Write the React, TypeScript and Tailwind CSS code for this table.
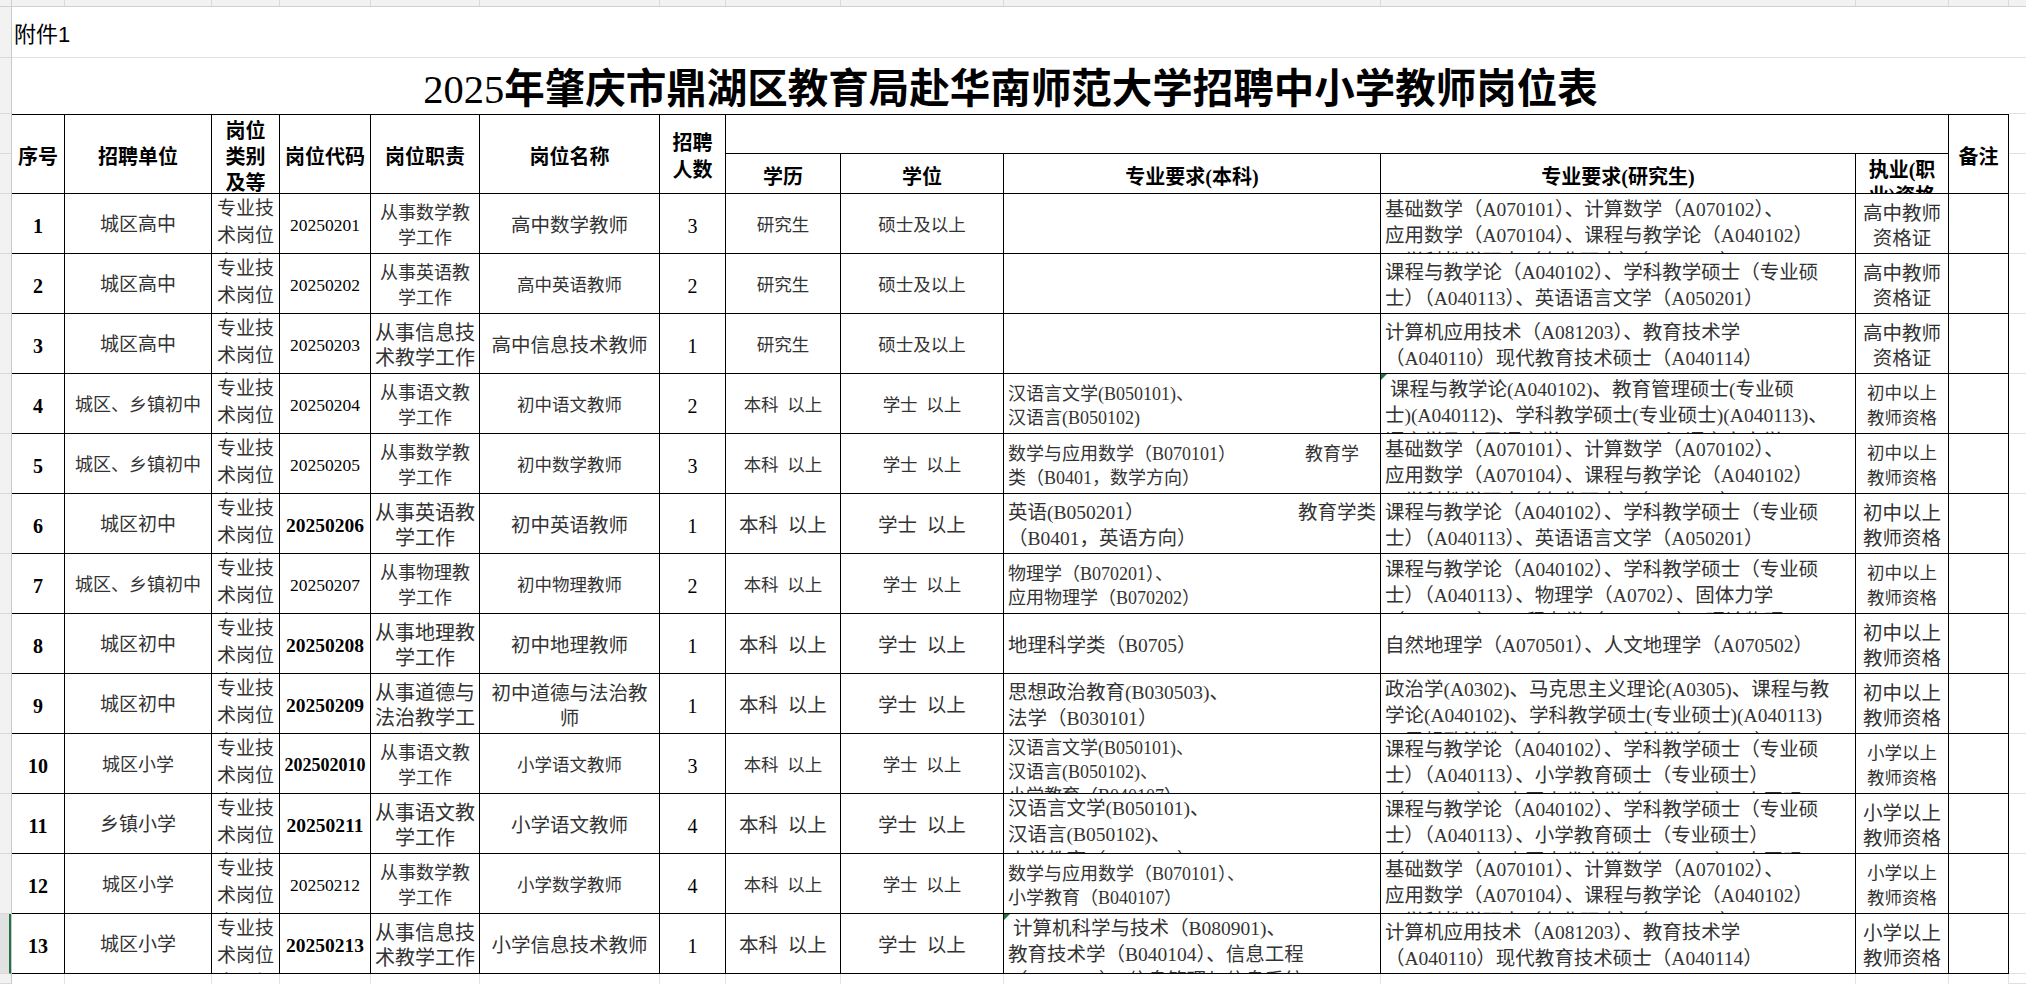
import React from 'react';

type Row = {
  no: string;
  unit: string;
  code: string;
  duty: string[];
  name: string[];
  num: string;
  edu: string;
  deg: string;
  bk: string[];
  bkSplit?: { left: string; right: string; rest: string[]; wide?: boolean };
  yjs: string[];
  cert: string[];
  big?: boolean;
  uBig?: boolean;
  dBig?: boolean;
  nBig?: boolean;
  cBig?: boolean;
  bold?: boolean;
  smallCode?: boolean;
  tick?: 'bk' | 'yjs';
};

const widthCls = [
  'w-[53px]',
  'w-[147px]',
  'w-[68px]',
  'w-[91px]',
  'w-[109px]',
  'w-[180px]',
  'w-[66px]',
  'w-[115px]',
  'w-[163px]',
  'w-[377px]',
  'w-[475px]',
  'w-[93px]',
  'w-[60px]',
];

const rows: Row[] = [
  {
    no: '1', unit: '城区高中', code: '20250201', duty: ['从事数学教', '学工作'], name: ['高中数学教师'], num: '3',
    edu: '研究生', deg: '硕士及以上', bk: [],
    yjs: ['基础数学（A070101）、计算数学（A070102）、', '应用数学（A070104）、课程与教学论（A040102）', '、学科教学硕士（专业硕士）（A040113）'],
    cert: ['高中教师', '资格证'], uBig: true, nBig: true, cBig: true,
  },
  {
    no: '2', unit: '城区高中', code: '20250202', duty: ['从事英语教', '学工作'], name: ['高中英语教师'], num: '2',
    edu: '研究生', deg: '硕士及以上', bk: [],
    yjs: ['课程与教学论（A040102）、学科教学硕士（专业硕', '士）（A040113）、英语语言文学（A050201）'],
    cert: ['高中教师', '资格证'], uBig: true, cBig: true,
  },
  {
    no: '3', unit: '城区高中', code: '20250203', duty: ['从事信息技', '术教学工作'], name: ['高中信息技术教师'], num: '1',
    edu: '研究生', deg: '硕士及以上', bk: [],
    yjs: ['计算机应用技术（A081203）、教育技术学', '（A040110）现代教育技术硕士（A040114）'],
    cert: ['高中教师', '资格证'], uBig: true, dBig: true, nBig: true, cBig: true,
  },
  {
    no: '4', unit: '城区、乡镇初中', code: '20250204', duty: ['从事语文教', '学工作'], name: ['初中语文教师'], num: '2',
    edu: '本科  以上', deg: '学士  以上', bk: ['汉语言文学(B050101)、', '汉语言(B050102)'],
    yjs: [' 课程与教学论(A040102)、教育管理硕士(专业硕', '士)(A040112)、学科教学硕士(专业硕士)(A040113)、', '语言学及应用语言学(A050102)、汉语言文字学'],
    cert: ['初中以上', '教师资格'], tick: 'yjs',
  },
  {
    no: '5', unit: '城区、乡镇初中', code: '20250205', duty: ['从事数学教', '学工作'], name: ['初中数学教师'], num: '3',
    edu: '本科  以上', deg: '学士  以上', bk: [],
    bkSplit: { left: '数学与应用数学（B070101）', right: '教育学', rest: ['类（B0401，数学方向）'] },
    yjs: ['基础数学（A070101）、计算数学（A070102）、', '应用数学（A070104）、课程与教学论（A040102）', '、学科教学硕士（专业硕士）（A040113）'],
    cert: ['初中以上', '教师资格'],
  },
  {
    no: '6', unit: '城区初中', code: '20250206', duty: ['从事英语教', '学工作'], name: ['初中英语教师'], num: '1',
    edu: '本科  以上', deg: '学士  以上', bk: [],
    bkSplit: { left: '英语(B050201）', right: '教育学类', rest: ['（B0401，英语方向）'], wide: true },
    yjs: ['课程与教学论（A040102）、学科教学硕士（专业硕', '士）（A040113）、英语语言文学（A050201）'],
    cert: ['初中以上', '教师资格'], big: true, uBig: true, dBig: true, nBig: true, cBig: true, bold: true,
  },
  {
    no: '7', unit: '城区、乡镇初中', code: '20250207', duty: ['从事物理教', '学工作'], name: ['初中物理教师'], num: '2',
    edu: '本科  以上', deg: '学士  以上', bk: ['物理学（B070201）、', '应用物理学（B070202）'],
    yjs: ['课程与教学论（A040102）、学科教学硕士（专业硕', '士）（A040113）、物理学（A0702）、固体力学', '（A080102）、工程力学（A080104）、理论物理'],
    cert: ['初中以上', '教师资格'],
  },
  {
    no: '8', unit: '城区初中', code: '20250208', duty: ['从事地理教', '学工作'], name: ['初中地理教师'], num: '1',
    edu: '本科  以上', deg: '学士  以上', bk: ['地理科学类（B0705）'],
    yjs: ['自然地理学（A070501）、人文地理学（A070502）'],
    cert: ['初中以上', '教师资格'], big: true, uBig: true, dBig: true, nBig: true, cBig: true, bold: true,
  },
  {
    no: '9', unit: '城区初中', code: '20250209', duty: ['从事道德与', '法治教学工', '作'], name: ['初中道德与法治教', '师'], num: '1',
    edu: '本科  以上', deg: '学士  以上', bk: ['思想政治教育(B030503)、', '法学（B030101）'],
    yjs: ['政治学(A0302)、马克思主义理论(A0305)、课程与教', '学论(A040102)、学科教学硕士(专业硕士)(A040113)', '、思想政治教育（A030505）、法学（A0301）'],
    cert: ['初中以上', '教师资格'], big: true, uBig: true, dBig: true, nBig: true, cBig: true, bold: true,
  },
  {
    no: '10', unit: '城区小学', code: '202502010', duty: ['从事语文教', '学工作'], name: ['小学语文教师'], num: '3',
    edu: '本科  以上', deg: '学士  以上', bk: ['汉语言文学(B050101)、', '汉语言(B050102)、', '小学教育（B040107）'],
    yjs: ['课程与教学论（A040102）、学科教学硕士（专业硕', '士）（A040113）、小学教育硕士（专业硕士）', '（A040115）、中国古代文学（A050105）、中国现'],
    cert: ['小学以上', '教师资格'], bold: true, smallCode: true,
  },
  {
    no: '11', unit: '乡镇小学', code: '20250211', duty: ['从事语文教', '学工作'], name: ['小学语文教师'], num: '4',
    edu: '本科  以上', deg: '学士  以上', bk: ['汉语言文学(B050101)、', '汉语言(B050102)、', '小学教育（B040107）'],
    yjs: ['课程与教学论（A040102）、学科教学硕士（专业硕', '士）（A040113）、小学教育硕士（专业硕士）', '（A040115）、中国古代文学（A050105）、中国现'],
    cert: ['小学以上', '教师资格'], big: true, uBig: true, dBig: true, nBig: true, cBig: true, bold: true,
  },
  {
    no: '12', unit: '城区小学', code: '20250212', duty: ['从事数学教', '学工作'], name: ['小学数学教师'], num: '4',
    edu: '本科  以上', deg: '学士  以上', bk: ['数学与应用数学（B070101）、', '小学教育（B040107）'],
    yjs: ['基础数学（A070101）、计算数学（A070102）、', '应用数学（A070104）、课程与教学论（A040102）', '、学科教学硕士（专业硕士）（A040113）'],
    cert: ['小学以上', '教师资格'],
  },
  {
    no: '13', unit: '城区小学', code: '20250213', duty: ['从事信息技', '术教学工作'], name: ['小学信息技术教师'], num: '1',
    edu: '本科  以上', deg: '学士  以上', bk: [' 计算机科学与技术（B080901)、', '教育技术学（B040104）、信息工程', '（B080706）、信息管理与信息系统'],
    yjs: ['计算机应用技术（A081203）、教育技术学', '（A040110）现代教育技术硕士（A040114）'],
    cert: ['小学以上', '教师资格'], big: true, uBig: true, dBig: true, nBig: true, cBig: true, bold: true, tick: 'bk',
  },
];

const B = 'relative border-r border-b border-black overflow-hidden';
const CENTER = 'flex flex-col items-center justify-center pt-[4px] text-center';
const TOP = 'flex flex-col items-center justify-start pt-[7px] text-center';

function Lines({ lines }: { lines: string[] }) {
  return (
    <>
      {lines.map((l, i) => (
        <div key={i} className="whitespace-pre">
          {l}
        </div>
      ))}
    </>
  );
}

function Tick() {
  return (
    <div className="absolute top-0 left-0 w-0 h-0 border-t-[6px] border-r-[6px] border-t-[#217346] border-r-transparent" />
  );
}

function DataRow({ r }: { r: Row }) {
  const bkLines = r.bkSplit ? 1 + r.bkSplit.rest.length : r.bk.length;
  return (
    <>
      <div className={`${B} ${CENTER} font-bold text-[20px] text-black`}>{r.no}</div>
      <div className={`${B} ${CENTER} whitespace-nowrap ${r.uBig ? 'text-[19px]' : 'text-[18px]'}`}>{r.unit}</div>
      <div className={`${B} flex flex-col items-center justify-start pt-[1px] leading-[27px] text-[19px]`}>
        <Lines lines={['专业技', '术岗位', '十二级']} />
      </div>
      <div
        className={`${B} ${CENTER} text-black ${
          r.bold ? (r.smallCode ? 'font-bold text-[18px]' : 'font-bold text-[19.5px]') : 'text-[17.5px]'
        }`}
      >
        {r.code}
      </div>
      <div
        className={`${B} ${r.duty.length > 2 ? TOP : CENTER} leading-[25px] ${r.dBig ? 'text-[20px]' : 'text-[18px]'}`}
      >
        <Lines lines={r.duty} />
      </div>
      <div
        className={`${B} ${r.name.length > 2 ? TOP : CENTER} leading-[25px] ${r.nBig ? 'text-[19.5px]' : 'text-[17.5px]'}`}
      >
        <Lines lines={r.name} />
      </div>
      <div className={`${B} ${CENTER} text-[20px] text-black`}>{r.num}</div>
      <div className={`${B} ${CENTER} whitespace-pre ${r.big ? 'text-[19.5px]' : 'text-[17.5px]'}`}>{r.edu}</div>
      <div className={`${B} ${CENTER} whitespace-pre ${r.big ? 'text-[19.5px]' : 'text-[17.5px]'}`}>{r.deg}</div>
      <div
        className={`${B} flex flex-col items-stretch pl-[4px] text-left ${
          bkLines > 2 ? 'justify-start pt-[2px]' : 'justify-center pt-[4px]'
        } ${r.big ? 'text-[19.5px] leading-[26px]' : 'text-[18px] leading-[24px]'}`}
      >
        {r.tick === 'bk' && <Tick />}
        {r.bkSplit ? (
          <>
            <div className={`flex justify-between whitespace-pre ${r.bkSplit.wide ? 'pr-[4px]' : 'pr-[21px]'}`}>
              <span>{r.bkSplit.left}</span>
              <span>{r.bkSplit.right}</span>
            </div>
            <Lines lines={r.bkSplit.rest} />
          </>
        ) : (
          <Lines lines={r.bk} />
        )}
      </div>
      <div
        className={`${B} flex flex-col items-start pl-[4px] text-left text-[19.5px] leading-[26px] ${
          r.yjs.length > 2 ? 'justify-start pt-[3px]' : 'justify-center pt-[4px]'
        }`}
      >
        {r.tick === 'yjs' && <Tick />}
        <Lines lines={r.yjs} />
      </div>
      <div className={`${B} ${CENTER} leading-[25px] ${r.cBig ? 'text-[19.5px]' : 'text-[17.5px]'}`}>
        <Lines lines={r.cert} />
      </div>
      <div className={B} />
    </>
  );
}

const stripHeights = [
  'h-[51px]', 'h-[56px]', 'h-[40px]', 'h-[40px]',
  'h-[60px]', 'h-[60px]', 'h-[60px]', 'h-[60px]', 'h-[60px]', 'h-[60px]', 'h-[60px]',
  'h-[60px]', 'h-[60px]', 'h-[60px]', 'h-[60px]', 'h-[60px]', 'h-[60px]',
  'h-[10px]',
];

function LeftStrip() {
  return (
    <div className="w-[12px] shrink-0 flex flex-col bg-[#f2f2f2] border-r border-[#c9c9c9]">
      {stripHeights.map((h, i) => (
        <div
          key={i}
          className={`${h} shrink-0 border-b border-[#d9d9d9] ${i === 16 ? 'bg-[#e1e1e1] border-r-2 border-r-[#217346]' : ''}`}
        />
      ))}
    </div>
  );
}

function RightStrip() {
  return (
    <div className="flex-1 flex flex-col bg-white">
      {stripHeights.map((h, i) => (
        <div key={i} className={`${h} shrink-0 border-b border-[#e0e0e0]`} />
      ))}
    </div>
  );
}

export default function App() {
  const H = 'border-r border-b border-black flex flex-col items-center justify-center font-bold text-[20px] text-black';
  return (
    <div className="w-[2026px] h-[984px] overflow-hidden bg-white font-['Liberation_Serif','Noto_Sans_CJK_SC',serif] text-[#333]">
      {/* column header strip */}
      <div className="flex h-[7px] bg-[#f2f2f2] border-b border-[#d0d0d0]">
        <div className="w-[12px] shrink-0 border-r border-[#d0d0d0]" />
        {widthCls.map((w, i) => (
          <div key={i} className={`${w} shrink-0 border-r border-[#dadada]`} />
        ))}
        <div className="flex-1" />
      </div>

      <div className="flex h-[977px]">
        <LeftStrip />

        <div className="w-[1997px] shrink-0 flex flex-col">
          <div className="h-[51px] shrink-0 border-b border-[#e0e0e0] flex items-center pl-[2px] pt-[4px] text-[22px] text-black font-['Liberation_Sans','Noto_Sans_CJK_SC',sans-serif]">
            附件1
          </div>
          <div className="h-[56px] shrink-0 flex items-center justify-center pt-[8px] text-[40.5px] font-bold text-black">
            <span className="font-normal">2025</span>年肇庆市鼎湖区教育局赴华南师范大学招聘中小学教师岗位表
          </div>

          <div className="grid grid-cols-[53px_147px_68px_91px_109px_180px_66px_115px_163px_377px_475px_93px_60px] grid-rows-[40px_40px_repeat(13,60px)]">
            <div className={`${H} row-span-2 border-t pt-[6px]`}>序号</div>
            <div className={`${H} row-span-2 border-t pt-[6px]`}>招聘单位</div>
            <div className={`${H} row-span-2 border-t pt-[6px] leading-[26px]`}>
              <Lines lines={['岗位', '类别', '及等']} />
            </div>
            <div className={`${H} row-span-2 border-t pt-[6px]`}>岗位代码</div>
            <div className={`${H} row-span-2 border-t pt-[6px]`}>岗位职责</div>
            <div className={`${H} row-span-2 border-t pt-[6px]`}>岗位名称</div>
            <div className={`${H} row-span-2 border-t pt-[5px] leading-[27px]`}>
              <Lines lines={['招聘', '人数']} />
            </div>
            <div className={`${H} col-span-5 border-t`} />
            <div className={`${H} row-span-2 border-t pt-[6px]`}>备注</div>

            <div className={`${H} pt-[6px]`}>学历</div>
            <div className={`${H} pt-[6px]`}>学位</div>
            <div className={`${H} pt-[6px]`}>专业要求(本科)</div>
            <div className={`${H} pt-[6px]`}>专业要求(研究生)</div>
            <div className="border-r border-b border-black overflow-hidden flex flex-col items-center justify-start pt-[3px] leading-[26px] font-bold text-[20px] text-black">
              <Lines lines={['执业(职', '业)资格']} />
            </div>

            {rows.map((r) => (
              <DataRow key={r.no} r={r} />
            ))}
          </div>

          {/* empty sheet below the table */}
          <div className="h-[10px] flex">
            {widthCls.map((w, i) => (
              <div key={i} className={`${w} shrink-0 border-r border-[#e3e3e3]`} />
            ))}
          </div>
        </div>

        <RightStrip />
      </div>
    </div>
  );
}
